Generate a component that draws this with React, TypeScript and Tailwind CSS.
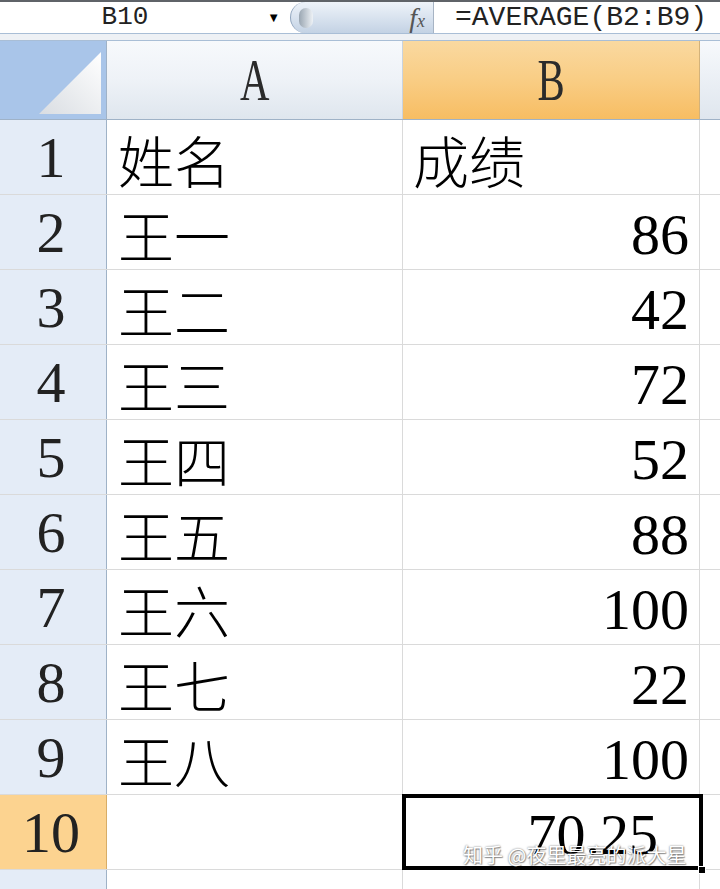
import React from "react";

const rows: [string, string, string][] = [
  ["1", "姓名", "成绩"],
  ["2", "王一", "86"],
  ["3", "王二", "42"],
  ["4", "王三", "72"],
  ["5", "王四", "52"],
  ["6", "王五", "88"],
  ["7", "王六", "100"],
  ["8", "王七", "22"],
  ["9", "王八", "100"],
];

const serif = "font-['Liberation_Serif','Times_New_Roman',serif]";
const cjk = "font-['Noto_Sans_CJK_SC','Noto_Sans',sans-serif]";
const mono = "font-['Liberation_Mono','DejaVu_Sans_Mono',monospace]";

function FormulaBar() {
  return (
    <div className="flex h-[33px] border-t-2 border-[#5f6368] bg-white">
      <div className={`w-[230px] flex items-center justify-center pl-[20px] text-[26px] text-[#222] ${mono}`}>
        B10
      </div>
      <div className="w-[60px] flex items-center justify-end pr-[10px]">
        <span className="text-[13px] text-black leading-none">▼</span>
      </div>
      <div className="w-[143px] flex items-center justify-between rounded-l-full bg-gradient-to-b from-[#eef3f9] via-[#d9e3ef] to-[#c3d2e4] border-l border-[#8fa4bd] pl-[8px] pr-[8px]">
        <div className="w-[14px] h-[20px] rounded-full bg-gradient-to-r from-[#9aa6b2] to-[#eef2f6]" />
        <span className={`text-[28px] italic text-[#555] leading-none ${serif}`}>
          f<span className="text-[18px]">x</span>
        </span>
      </div>
      <div className="w-px bg-[#a7b4c4]" />
      <div className={`flex-1 flex items-center pl-[21px] text-[28px] text-[#222] ${mono}`}>
        =AVERAGE(B2:B9)
      </div>
    </div>
  );
}

function HeaderRow() {
  return (
    <div className="flex h-[79px] border-b border-[#9fb2c7]">
      <div className="w-[107px] bg-[#a9c5e9] border-r border-[#9fb2c7] relative">
        <svg className="absolute right-[5px] bottom-[5px]" width="62" height="62" viewBox="0 0 62 62">
          <defs>
            <linearGradient id="tri" x1="0" y1="1" x2="1" y2="0">
              <stop offset="0" stopColor="#d9dde2" />
              <stop offset="1" stopColor="#ffffff" />
            </linearGradient>
          </defs>
          <polygon points="62,0 62,62 0,62" fill="url(#tri)" />
        </svg>
      </div>
      <div className="w-[296px] flex items-center justify-center bg-gradient-to-b from-[#f7f9fc] via-[#eef2f7] to-[#dfe6ee] border-r border-[#c9d3de]">
        <span className={`inline-block scale-x-[0.68] text-[60px] leading-none text-[#2b2b2b] ${serif}`}>A</span>
      </div>
      <div className="w-[297px] flex items-center justify-center bg-gradient-to-b from-[#fad9a0] via-[#f9cd84] to-[#f7bd62] border-r border-[#d3b27a]">
        <span className={`inline-block scale-x-[0.68] text-[60px] leading-none text-[#2b2b2b] ${serif}`}>B</span>
      </div>
      <div className="flex-1 bg-gradient-to-b from-[#f7f9fc] to-[#dfe6ee]" />
    </div>
  );
}

function Row({ num, a, b }: { num: string; a: string; b: string }) {
  const isNum = /^\d/.test(b);
  return (
    <div className="flex h-[75px] border-b border-[#dadada]">
      <div className={`w-[107px] flex items-center justify-center pr-[4px] bg-[#e4ecf7] border-r border-[#9fb2c7] text-[58px] text-[#222] ${serif}`}>
        {num}
      </div>
      <div className={`w-[296px] flex items-center pl-[11px] pt-[4px] border-r border-[#dadada] text-[56px] font-light text-black ${cjk}`}>
        {a}
      </div>
      <div
        className={`w-[297px] flex items-center border-r border-[#dadada] text-black ${
          isNum ? `justify-end pr-[10px] pt-[4px] text-[58px] ${serif}` : `pl-[10px] pt-[4px] text-[56px] font-light ${cjk}`
        }`}
      >
        {b}
      </div>
      <div className="flex-1 bg-white" />
    </div>
  );
}

export default function App() {
  return (
    <div className="w-[720px] h-[889px] overflow-hidden bg-white relative flex flex-col">
      <FormulaBar />
      <div className="h-[8px] border-t border-[#a9bed6] border-b border-[#8e9aa6] bg-[#eef1f5]" />
      <HeaderRow />
      {rows.map(([n, a, b]) => (
        <Row key={n} num={n} a={a} b={b} />
      ))}
      {/* row 10 with active cell */}
      <div className="flex h-[75px] border-b border-[#dadada]">
        <div className={`w-[107px] flex items-center justify-center pr-[4px] bg-[#fcd390] border-r border-[#d8ad66] text-[58px] text-[#222] ${serif}`}>
          10
        </div>
        <div className="w-[296px] border-r border-[#dadada]" />
        <div className={`w-[297px] relative flex items-center justify-end pr-[42px] pt-[4px] text-[58px] text-black ${serif}`}>
          70.25
          <div className="absolute -left-px -top-px -right-[3px] -bottom-px border-[4px] border-black pointer-events-none" />
          <div className="absolute -right-[6px] -bottom-[5px] w-[8px] h-[8px] bg-black border border-white" />
        </div>
        <div className="flex-1 bg-white" />
      </div>
      <div className="flex flex-1">
        <div className="w-[107px] bg-[#e4ecf7] border-r border-[#9fb2c7]" />
        <div className="w-[296px] border-r border-[#dadada]" />
        <div className="w-[297px] border-r border-[#dadada]" />
        <div className="flex-1" />
      </div>
      <div className={`absolute left-[463px] top-[845px] whitespace-nowrap text-[20px] leading-none text-white [text-shadow:0_0_2px_rgba(0,0,0,0.6),1px_1px_1px_rgba(0,0,0,0.35)] ${cjk}`}>
        知乎 @夜里最亮的派大星
      </div>
    </div>
  );
}
